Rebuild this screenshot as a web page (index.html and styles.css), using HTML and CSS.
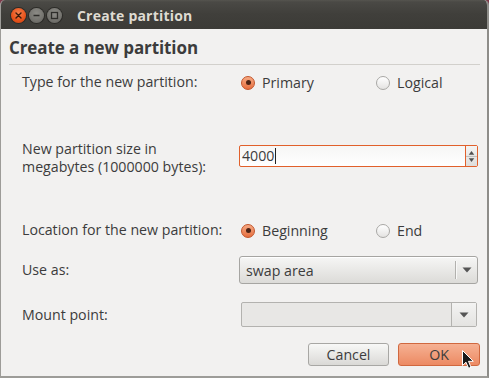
FILE: index.html
```html
<!DOCTYPE html>
<html>
<head>
<meta charset="utf-8">
<link rel="stylesheet" href="styles.css">
</head>
<body>
<div class="window">
  <div class="titlebar">
    <div class="wbtns">
      <span class="wbtn close"><svg width="15" height="15" viewBox="0 0 15 15"><path d="M5 5 L10 10 M10 5 L5 10" stroke="#3a1a0a" stroke-width="1.4" stroke-linecap="round"/></svg></span>
      <span class="wbtn min"><svg width="15" height="15" viewBox="0 0 15 15"><path d="M4.5 7.5 H10.5" stroke="#2e2d2a" stroke-width="1.6"/></svg></span>
      <span class="wbtn max"><svg width="15" height="15" viewBox="0 0 15 15"><rect x="4.5" y="4.5" width="6" height="6" fill="none" stroke="#2e2d2a" stroke-width="1.3"/></svg></span>
    </div>
    <span class="title">Create partition</span>
  </div>
  <div class="content">
    <h1 class="heading">Create a new partition</h1>
    <div class="sep"></div>
    <div class="form">
      <div class="row r1">
        <div class="label">Type for the new partition:</div>
        <div class="radios">
          <span class="opt"><span class="radio on"></span>Primary</span>
          <span class="opt"><span class="radio"></span>Logical</span>
        </div>
      </div>
      <div class="row r2">
        <div class="label">New partition size in<br>megabytes (1000000 bytes):</div>
        <div class="spin">
          <span class="spin-text">4000<span class="caret"></span></span>
          <span class="spin-btns">
            <svg width="12" height="20" viewBox="0 0 12 20"><path d="M3 8.5 L6 4.5 L9 8.5 Z" fill="#505050"/><path d="M0 10.5 H12" stroke="#b9b9b9" stroke-width="1"/><path d="M3 12.5 L6 16.5 L9 12.5 Z" fill="#505050"/></svg>
          </span>
        </div>
      </div>
      <div class="row r3">
        <div class="label">Location for the new partition:</div>
        <div class="radios">
          <span class="opt"><span class="radio on"></span>Beginning</span>
          <span class="opt"><span class="radio"></span>End</span>
        </div>
      </div>
      <div class="row r4">
        <div class="label">Use as:</div>
        <div class="combo">
          <span class="combo-text">swap area</span>
          <span class="combo-sep"></span>
          <span class="combo-arrow"><svg width="10" height="6" viewBox="0 0 10 6"><path d="M0.5 0.5 H9.5 L5 5.5 Z" fill="#555"/></svg></span>
        </div>
      </div>
      <div class="row r5">
        <div class="label">Mount point:</div>
        <div class="mount">
          <span class="mount-field"></span>
          <span class="mount-arrow"><svg width="10" height="6" viewBox="0 0 10 6"><path d="M0.5 0.5 H9.5 L5 5.5 Z" fill="#555"/></svg></span>
        </div>
      </div>
    </div>
    <div class="actions">
      <button class="btn cancel">Cancel</button>
      <button class="btn ok">OK</button>
    </div>
  </div>
  <svg class="cursor" width="14" height="20" viewBox="0 0 14 20"><path d="M0.5 0.5 L0.5 15.5 L4 12.2 L6.6 18.3 L9 17.3 L6.5 11.3 L11.3 11.3 Z" fill="#1a1a1a" stroke="#ffffff" stroke-width="1" stroke-linejoin="round"/></svg>
</div>
</body>
</html>
```
FILE: styles.css
```css
* { box-sizing: border-box; }
html, body { margin: 0; padding: 0; }
body {
  width: 489px;
  height: 378px;
  background: #7d3a4a;
  font-family: "Open Sans", "DejaVu Sans", sans-serif;
  color: #3c3c3c;
  overflow: hidden;
}
.window {
  position: relative;
  width: 489px;
  height: 378px;
  background: #f2f1f0;
  border-left: 1px solid #9d9c98;
  border-right: 2px solid #8e8d89;
  border-bottom: 2px solid #9d9c98;
  border-radius: 5px 5px 0 0;
  overflow: hidden;
  display: flex;
  flex-direction: column;
}
.titlebar {
  height: 29px;
  flex: none;
  background: linear-gradient(#55544f 0, #4a4945 2px, #403f3b 14px, #3c3b37 100%);
  display: flex;
  align-items: center;
  margin: 0 -2px 0 -1px;
  padding-left: 11px;
}
.wbtns { display: flex; gap: 3px; margin-top: 2px; }
.wbtn {
  width: 15px;
  height: 15px;
  border-radius: 50%;
  display: block;
}
.wbtn svg { display: block; }
.close { background: radial-gradient(circle at 50% 35%, #f4814f 0, #e9541c 55%, #c8400f 100%); box-shadow: 0 0 0 1px #2c2b28; }
.min, .max { background: radial-gradient(circle at 50% 35%, #8c8b86 0, #74736e 60%, #5f5e5a 100%); box-shadow: 0 0 0 1px #2c2b28; }
.title {
  margin-left: 15px;
  margin-top: 1px;
  color: #dfdbd2;
  font-weight: bold;
  font-size: 14px;
  letter-spacing: 0.2px;
}
.content {
  flex: 1;
  display: flex;
  flex-direction: column;
}
.heading {
  margin: 9px 0 0 8px;
  font-size: 17px;
  line-height: 20px;
  font-weight: bold;
  letter-spacing: -0.1px;
  color: #3c3c3c;
}
.sep {
  height: 1px;
  margin: 6px 7px 0 8px;
  background: #d2d0cc;
}
.form {
  padding: 0 9px 0 21px;
  display: flex;
  flex-direction: column;
  font-size: 14.2px;
}
.row {
  display: grid;
  grid-template-columns: 217px 1fr;
  align-items: center;
}
.label { line-height: 18px; white-space: nowrap; }
.r1 { margin-top: 5px; height: 24px; }
.r2 { margin-top: 46px; height: 36px; align-items: start; }
.r3 { margin-top: 42px; height: 24px; }
.r4 { margin-top: 14px; height: 28px; }
.r5 { margin-top: 18px; height: 25px; }
.radios { display: flex; padding-left: 2px; }
.opt {
  width: 135px;
  display: flex;
  align-items: center;
  gap: 7px;
}
.radio {
  width: 14px;
  height: 14px;
  border-radius: 50%;
  border: 1px solid #a9a8a5;
  background: linear-gradient(#ffffff, #e4e3e1);
  flex: none;
  position: relative;
  margin-top: 1px;
}
.radio.on {
  border-color: #c2542a;
  background: linear-gradient(#f6a983, #e66f3f);
}
.radio.on::after {
  content: "";
  position: absolute;
  left: 3.5px;
  top: 3.5px;
  width: 5px;
  height: 5px;
  border-radius: 50%;
  background: #4b2315;
}
.spin {
  margin-top: 5px;
  height: 22px;
  display: flex;
  border: 1px solid #e1602b;
  border-radius: 2px;
  background: linear-gradient(#f6f6f5, #ffffff);
}
.spin-text {
  flex: 1;
  padding-left: 2px;
  line-height: 20px;
  display: flex;
  align-items: center;
}
.caret {
  display: inline-block;
  width: 1px;
  height: 16px;
  background: #222;
  margin-left: 1px;
}
.spin-btns {
  width: 12px;
  border-left: 1px solid #e1602b;
  background: linear-gradient(#f4f4f3, #dedddb);
  display: flex;
}
.spin-btns svg { display: block; }
.combo {
  height: 28px;
  display: flex;
  align-items: center;
  border: 1px solid #a6a5a2;
  border-radius: 3px;
  background: linear-gradient(#f6f6f5, #dcdbd8);
  box-shadow: inset 0 1px 0 #ffffff;
}
.combo-text { flex: 1; padding-left: 6px; }
.combo-sep {
  width: 2px;
  height: 18px;
  border-left: 1px solid #b2b1ae;
  border-right: 1px solid #f8f8f7;
}
.combo-arrow {
  width: 20px;
  display: flex;
  justify-content: center;
}
.combo-arrow svg, .mount-arrow svg { display: block; }
.mount {
  height: 25px;
  margin: 0 1px 0 2px;
  display: flex;
  border: 1px solid #b3b2af;
  border-radius: 2px;
  background: #e8e7e5;
}
.mount-field { flex: 1; border-right: 1px solid #b3b2af; }
.mount-arrow {
  width: 24px;
  display: flex;
  align-items: center;
  justify-content: center;
  background: linear-gradient(#f3f3f2, #e4e3e1);
}
.actions {
  display: flex;
  justify-content: flex-end;
  gap: 9px;
  margin-top: 16px;
  padding-right: 7px;
}
.btn {
  height: 23px;
  border-radius: 3px;
  font-family: "Open Sans", "DejaVu Sans", sans-serif;
  font-size: 14.2px;
  color: #3c3c3c;
  padding: 0;
}
.cancel {
  width: 81px;
  border: 1px solid #a8a7a4;
  background: linear-gradient(#f8f8f7, #dad9d6);
}
.ok {
  width: 82px;
  border: 1px solid #d0683f;
  background: linear-gradient(#f6b193, #ec8a63);
}
.cursor {
  position: absolute;
  left: 461px;
  top: 350px;
}
```
